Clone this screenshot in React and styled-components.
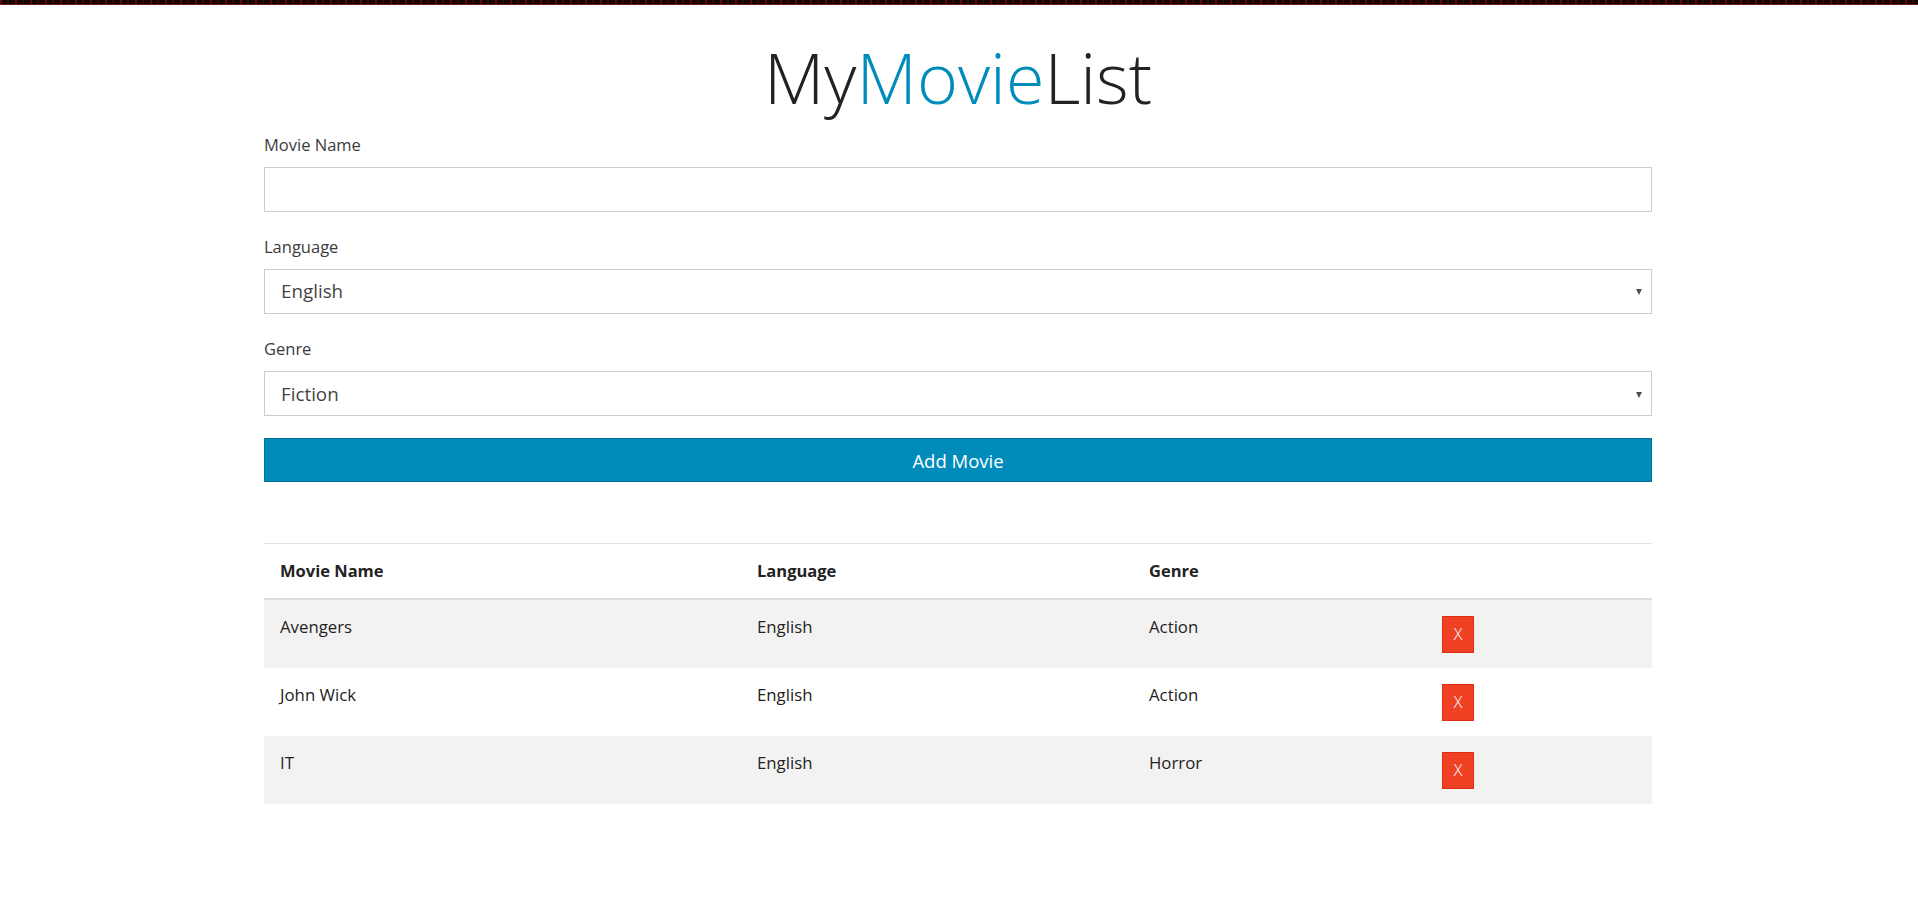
import React, { useState } from "react";
import styled, { createGlobalStyle } from "styled-components";

const GlobalStyle = createGlobalStyle`
  html, body { margin: 0; padding: 0; background: #fff; }
  body { font-family: "Open Sans", "Liberation Sans", sans-serif; color: #222; }
  * { box-sizing: border-box; }
`;

const TopBar = styled.div`
  height: 5px;
  background-color: #1a0506;
  background-image:
    repeating-linear-gradient(90deg, rgba(130, 14, 18, 0.6) 0 2px, transparent 2px 7px, rgba(95, 8, 12, 0.45) 7px 9px, transparent 9px 15px),
    repeating-linear-gradient(0deg, rgba(0, 0, 0, 0.45) 0 1px, transparent 1px 2px);
  border-bottom: 1px solid #761418;
`;

const Page = styled.main`
  width: 1388px;
  margin: 0 calc(50% - 693px) 0 calc(50% - 695px);
  padding-bottom: 60px;
`;

const Title = styled.h1`
  margin: 37px 0 20px;
  font-size: 70px;
  line-height: 70px;
  font-weight: 300;
  text-align: center;
  color: #222;
`;

const Accent = styled.span`
  color: #008cba;
`;

const Field = styled.div`
  margin-bottom: 22.5px;
`;

const Label = styled.label`
  display: block;
  font-size: 16.5px;
  line-height: 25.2px;
  color: #3b3b3b;
  margin-bottom: 10px;
`;

const TextInput = styled.input`
  display: block;
  width: 100%;
  height: 44.4px;
  border: 1px solid #cccccc;
  background: #fff;
  padding: 0 16px;
  font-family: inherit;
  font-size: 18.8px;
  color: #444;
  outline: none;
`;

const SelectWrap = styled.div`
  position: relative;
  &::after {
    content: "";
    position: absolute;
    right: 10px;
    top: 50%;
    margin-top: -2px;
    border-left: 3.5px solid transparent;
    border-right: 3.5px solid transparent;
    border-top: 6px solid #4a4f55;
    pointer-events: none;
  }
`;

const Select = styled.select`
  display: block;
  width: 100%;
  height: 44.4px;
  border: 1px solid #cccccc;
  border-radius: 0;
  background: #fff;
  padding: 0 16px;
  font-family: inherit;
  font-size: 18.8px;
  color: #444;
  appearance: none;
  -webkit-appearance: none;
  outline: none;
`;

const AddButton = styled.button`
  display: block;
  width: 100%;
  height: 44px;
  border: 1px solid #007095;
  background: #008cba;
  color: #fff;
  font-family: inherit;
  font-size: 18.5px;
  font-weight: 400;
  cursor: pointer;
  padding: 0;
`;

const Table = styled.table`
  width: 100%;
  margin-top: 61px;
  border-collapse: collapse;
  table-layout: fixed;
  border-top: 1px solid #e1e1e1;
`;

const HeadCell = styled.th`
  width: ${(p) => p.$w || "auto"};
  text-align: left;
  font-size: 16.5px;
  line-height: 21.6px;
  font-weight: 700;
  color: #222;
  padding: 16px 16px 16px;
  border-bottom: 2px solid #dddddd;
  vertical-align: top;
`;

const Row = styled.tr`
  background: ${(p) => (p.$striped ? "#f2f2f2" : "#ffffff")};
  & + & td {
    border-top: 1px solid #e1e1e1;
  }
`;

const Cell = styled.td`
  font-size: 16.8px;
  line-height: 21.6px;
  color: #222;
  padding: 16px 16px 15px;
  vertical-align: top;
`;

const DeleteButton = styled.button`
  display: flex;
  align-items: center;
  justify-content: center;
  width: 32px;
  height: 37px;
  padding: 0;
  border: 1px solid #de2d0f;
  background: #f04124;
  color: #fff;
  font-family: inherit;
  font-size: 16px;
  font-weight: 300;
  cursor: pointer;
`;

const initialMovies = [
  { name: "Avengers", language: "English", genre: "Action" },
  { name: "John Wick", language: "English", genre: "Action" },
  { name: "IT", language: "English", genre: "Horror" },
];

export default function App() {
  const [movies, setMovies] = useState(initialMovies);
  const [name, setName] = useState("");
  const [language, setLanguage] = useState("English");
  const [genre, setGenre] = useState("Fiction");

  const add = (e) => {
    e.preventDefault();
    if (!name.trim()) return;
    setMovies([...movies, { name: name.trim(), language, genre }]);
    setName("");
  };

  return (
    <>
      <GlobalStyle />
      <TopBar />
      <Page>
        <Title>
          My<Accent>Movie</Accent>List
        </Title>
        <form onSubmit={add}>
          <Field>
            <Label htmlFor="movie-name">Movie Name</Label>
            <TextInput id="movie-name" value={name} onChange={(e) => setName(e.target.value)} />
          </Field>
          <Field>
            <Label htmlFor="language">Language</Label>
            <SelectWrap>
              <Select id="language" value={language} onChange={(e) => setLanguage(e.target.value)}>
                <option>English</option>
                <option>Hindi</option>
                <option>French</option>
                <option>Spanish</option>
              </Select>
            </SelectWrap>
          </Field>
          <Field>
            <Label htmlFor="genre">Genre</Label>
            <SelectWrap>
              <Select id="genre" value={genre} onChange={(e) => setGenre(e.target.value)}>
                <option>Fiction</option>
                <option>Action</option>
                <option>Horror</option>
                <option>Comedy</option>
              </Select>
            </SelectWrap>
          </Field>
          <AddButton type="submit">Add Movie</AddButton>
        </form>
        <Table>
          <thead>
            <tr>
              <HeadCell $w="477px">Movie Name</HeadCell>
              <HeadCell $w="392px">Language</HeadCell>
              <HeadCell $w="293px">Genre</HeadCell>
              <HeadCell />
            </tr>
          </thead>
          <tbody>
            {movies.map((m, i) => (
              <Row key={m.name + i} $striped={i % 2 === 0}>
                <Cell>{m.name}</Cell>
                <Cell>{m.language}</Cell>
                <Cell>{m.genre}</Cell>
                <Cell>
                  <DeleteButton onClick={() => setMovies(movies.filter((_, j) => j !== i))}>X</DeleteButton>
                </Cell>
              </Row>
            ))}
          </tbody>
        </Table>
      </Page>
    </>
  );
}
